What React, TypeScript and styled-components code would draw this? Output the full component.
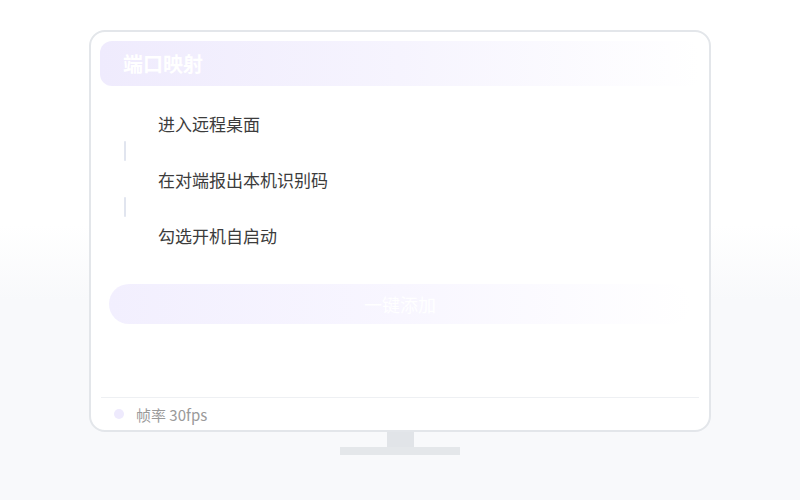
import styled, { createGlobalStyle } from 'styled-components';

const GlobalStyle = createGlobalStyle`
  html, body {
    margin: 0;
    padding: 0;
    background: linear-gradient(180deg, #ffffff 0%, #ffffff 45%, #f8f9fb 60%, #f8f9fb 100%);
    font-family: "Noto Sans CJK SC", "Noto Sans", sans-serif;
  }
`;

const Page = styled.div`
  width: 800px;
  height: 500px;
  padding-top: 30px;
  box-sizing: border-box;
  display: flex;
  flex-direction: column;
  align-items: center;
`;

const Screen = styled.div`
  width: 622px;
  height: 402px;
  box-sizing: border-box;
  border: 2px solid #e3e6ea;
  border-radius: 16px;
  background: #ffffff;
  padding: 9px 9px 0 9px;
  display: flex;
  flex-direction: column;
`;

const Header = styled.div`
  height: 45px;
  border-radius: 12px;
  background: linear-gradient(90deg, #efebfd 0%, #f6f4fe 50%, #ffffff 100%);
  display: flex;
  align-items: center;
  padding-left: 23px;
  color: #ffffff;
  font-size: 20px;
  font-weight: 700;
`;

const Steps = styled.div`
  margin: 19px 0 0 24px;
  display: flex;
  flex-direction: column;
`;

const Step = styled.div`
  height: 36px;
  display: flex;
  align-items: center;
  padding-left: 34px;
  font-size: 17px;
  color: #3c3c3c;
`;

const Connector = styled.div`
  width: 2px;
  height: 20px;
  background: #e1e5ef;
  border-radius: 1px;
`;

const AddButton = styled.div`
  margin: 31px 9px 0 9px;
  height: 40px;
  border-radius: 20px;
  background: linear-gradient(90deg, #f2effe 0%, #f8f6ff 50%, #ffffff 100%);
  display: flex;
  align-items: center;
  justify-content: center;
  color: #ffffff;
  font-size: 18px;
`;

const Spacer = styled.div`
  flex: 1;
`;

const Footer = styled.div`
  margin: 0 1px;
  height: 32px;
  border-top: 1px solid #eef0f3;
  display: flex;
  align-items: center;
  padding-left: 13px;
  gap: 12px;
  font-size: 15px;
  color: #9a9a9a;
`;

const Dot = styled.span`
  width: 10px;
  height: 10px;
  border-radius: 50%;
  background: #eeeafd;
`;

const Neck = styled.div`
  width: 27px;
  height: 15px;
  background: #e1e4e8;
`;

const Base = styled.div`
  width: 120px;
  height: 8px;
  background: #e4e7ea;
`;

const steps = ['进入远程桌面', '在对端报出本机识别码', '勾选开机自启动'];

export default function App() {
  return (
    <>
      <GlobalStyle />
      <Page>
        <Screen>
          <Header>端口映射</Header>
          <Steps>
            {steps.map((s, i) => (
              <div key={s}>
                {i > 0 && <Connector />}
                <Step>{s}</Step>
              </div>
            ))}
          </Steps>
          <AddButton>一键添加</AddButton>
          <Spacer />
          <Footer>
            <Dot />
            帧率 30fps
          </Footer>
        </Screen>
        <Neck />
        <Base />
      </Page>
    </>
  );
}
